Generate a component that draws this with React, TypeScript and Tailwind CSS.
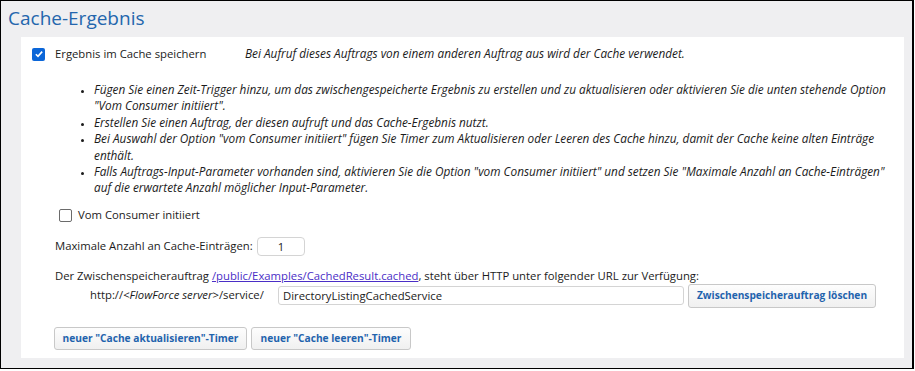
import { useState } from 'react'

const font = { fontFamily: '"Open Sans", "Noto Sans", sans-serif' }

function Check({ checked, onChange }: { checked: boolean; onChange: () => void }) {
  return (
    <button
      onClick={onChange}
      className={
        checked
          ? 'flex h-[13px] w-[13px] shrink-0 items-center justify-center rounded-[2px] bg-[#0b66d8]'
          : 'flex h-[13px] w-[13px] shrink-0 items-center justify-center rounded-[2px] border border-[#6b6b6b] bg-white'
      }
    >
      {checked && (
        <svg viewBox="0 0 12 12" className="h-[10px] w-[10px]">
          <path d="M2.2 6.3 L4.8 8.8 L9.8 3.2" fill="none" stroke="white" strokeWidth="2" />
        </svg>
      )}
    </button>
  )
}

function Btn({ children, className = '' }: { children: React.ReactNode; className?: string }) {
  return (
    <button
      className={
        'flex items-center justify-center whitespace-nowrap rounded-[3px] border border-[#c8c8c8] bg-gradient-to-b from-[#fdfdfd] to-[#f0f0f0] text-[10.2px] font-bold text-[#1f63ad] ' +
        className
      }
    >
      {children}
    </button>
  )
}

export default function App() {
  const [store, setStore] = useState(true)
  const [consumer, setConsumer] = useState(false)

  return (
    <div style={font} className="flex h-[369px] w-[914px] flex-col border border-r-2 border-black bg-[#efeff1] text-[11.3px] text-[#1b1b1b]">
      {/* Title */}
      <div className="flex h-[36px] items-center px-[7px] pb-[1px] text-[19px] leading-none text-[#2466ad]">
        Cache-Ergebnis
      </div>

      {/* Panel */}
      <div className="ml-[20px] mr-[8px] flex h-[321px] flex-col bg-white pt-[9px]">
        <div className="flex h-[16px] items-center">
          <div className="ml-[11px]">
            <Check checked={store} onChange={() => setStore(!store)} />
          </div>
          <span className="ml-[10px] w-[190px]">Ergebnis im Cache speichern</span>
          <span className="text-[11.8px] italic">
            Bei Aufruf dieses Auftrags von einem anderen Auftrag aus wird der Cache verwendet.
          </span>
        </div>

        <ul className="mt-[19px] list-disc whitespace-nowrap pl-[73px] text-[11.8px] leading-[16.4px] italic marker:text-[9px]">
          <li>
            Fügen Sie einen Zeit-Trigger hinzu, um das zwischengespeicherte Ergebnis zu erstellen und zu
            aktualisieren oder aktivieren Sie die unten stehende Option
            <br />
            "Vom Consumer initiiert".
          </li>
          <li>Erstellen Sie einen Auftrag, der diesen aufruft und das Cache-Ergebnis nutzt.</li>
          <li>
            Bei Auswahl der Option "vom Consumer initiiert" fügen Sie Timer zum Aktualisieren oder Leeren des
            Cache hinzu, damit der Cache keine alten Einträge
            <br />
            enthält.
          </li>
          <li>
            Falls Auftrags-Input-Parameter vorhanden sind, aktivieren Sie die Option "vom Consumer initiiert"
            und setzen Sie "Maximale Anzahl an Cache-Einträgen"
            <br />
            auf die erwartete Anzahl möglicher Input-Parameter.
          </li>
        </ul>

        <div className="mt-[12px] flex h-[16px] items-center pl-[38px]">
          <Check checked={consumer} onChange={() => setConsumer(!consumer)} />
          <span className="ml-[6px]">Vom Consumer initiiert</span>
        </div>

        <div className="mt-[13px] flex items-center pl-[34px]">
          <span className="w-[202px] whitespace-nowrap">Maximale Anzahl an Cache-Einträgen:</span>
          <input
            defaultValue="1"
            className="h-[19px] w-[48px] rounded-[4px] border border-[#d4d4d4] text-center text-[11.3px] outline-none"
          />
        </div>

        <div className="mt-[12px] whitespace-nowrap pl-[34px] leading-[16px]">
          Der Zwischenspeicherauftrag{' '}
          <a href="#" className="text-[#4a2ec6] underline">
            /public/Examples/CachedResult.cached
          </a>
          , steht über HTTP unter folgender URL zur Verfügung:
        </div>

        <div className="flex items-center pl-[69px]">
          <span className="w-[188px] whitespace-nowrap">
            http://&lt;<span className="italic">FlowForce server</span>&gt;/service/
          </span>
          <input
            defaultValue="DirectoryListingCachedService"
            className="h-[19px] w-[406px] rounded-[3px] border border-[#d4d4d4] px-[4px] text-[11.3px] outline-none"
          />
          <Btn className="ml-[4px] h-[24px] w-[188px]">Zwischenspeicherauftrag löschen</Btn>
        </div>

        <div className="mt-[19px] flex gap-[4px] pl-[33px]">
          <Btn className="h-[23px] w-[193px]">neuer "Cache aktualisieren"-Timer</Btn>
          <Btn className="h-[23px] w-[160px]">neuer "Cache leeren"-Timer</Btn>
        </div>
      </div>
    </div>
  )
}
